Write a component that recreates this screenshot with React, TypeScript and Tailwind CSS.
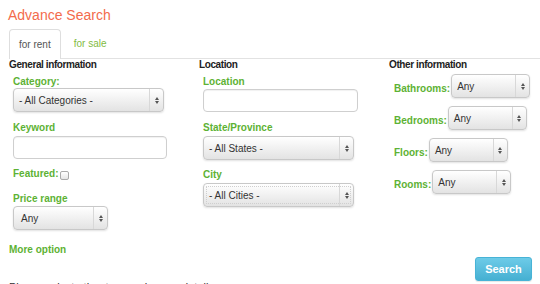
import React from 'react'

const GREEN = 'text-[#5db234]'

type SelectProps = { value: string; width: string; top?: boolean; focused?: boolean; pad?: string }

const FakeSelect = ({ value, width, top, focused, pad = 'pl-[5px]' }: SelectProps) => (
  <div
    className={`flex h-[24px] ${width} rounded-[4px] border border-[#c8c8c8] bg-linear-to-b from-white to-[#e3e3e3] text-[10px] text-[#333] shadow-[0_1px_2px_rgba(0,0,0,0.12)] ${
      focused ? 'outline-1 outline-dotted outline-[#cfcfcf] -outline-offset-[4px]' : ''
    }`}
  >
    <div className={`flex flex-1 ${top ? 'items-start pt-[4px]' : 'items-center'} ${pad}`}>{value}</div>
    <div className="flex w-[14px] flex-col items-center justify-center gap-[1px] border-l border-[#d8d8d8]">
      <span className="h-0 w-0 border-x-[2px] border-b-[3px] border-x-transparent border-b-[#555]" />
      <span className="h-0 w-0 border-x-[2px] border-t-[3px] border-x-transparent border-t-[#555]" />
    </div>
  </div>
)

const TextInput = ({ width }: { width: string }) => (
  <div className={`h-[23px] ${width} rounded-[4px] border border-[#cfcfcf] bg-white shadow-[inset_0_1px_1px_rgba(0,0,0,0.06)]`} />
)

const Label = ({ children, className = '' }: { children: React.ReactNode; className?: string }) => (
  <div className={`h-[13px] text-[10px] font-bold leading-[13px] ${GREEN} ${className}`}>{children}</div>
)

const Header = ({ children }: { children: React.ReactNode }) => (
  <div className="h-[12px] text-[10px] font-bold leading-[12px] tracking-[-0.4px] text-[#222]">{children}</div>
)

const OTHER = [
  { label: 'Bathrooms:', mt: 'mt-[3px]' },
  { label: 'Bedrooms:', mt: 'mt-[8px]' },
  { label: 'Floors:', mt: 'mt-[8px]' },
  { label: 'Rooms:', mt: 'mt-[8px]' },
]

export default function App() {
  return (
    <div className="h-[284px] w-[540px] overflow-hidden bg-white font-['Liberation_Sans',Arial,sans-serif] text-[#333]">
      <h1 className="px-[8px] pt-[7px] text-[14px] leading-[17px] text-[#f36b4c]">Advance Search</h1>

      <div className="ml-[9px] mt-[5px] flex border-b border-[#e2e2e2]">
        <div className="-mb-px flex h-[30px] items-center rounded-t-[4px] border border-b-0 border-[#dedede] bg-white px-[9px] text-[10px] text-[#555]">
          for rent
        </div>
        <div className="flex h-[29px] items-center px-[13px] text-[10px] text-[#82bb3f]">for sale</div>
      </div>

      <div className="flex px-[9px]">
        {/* General information */}
        <div className="w-[190px]">
          <Header>General information</Header>
          <div className="pl-[4px]">
            <Label className="mt-[4px]">Category:</Label>
            <FakeSelect value="- All Categories -" width="w-[151px]" />
            <Label className="mt-[9px]">Keyword</Label>
            <div className="mt-[2px]">
              <TextInput width="w-[154px]" />
            </div>
            <div className="mt-[8px] flex items-center">
              <Label>Featured:</Label>
              <span className="ml-[1px] mt-[3px] h-[9px] w-[9px] rounded-[2px] border border-[#aaa] bg-linear-to-b from-white to-[#e6e6e6]" />
            </div>
            <Label className="mt-[12px]">Price range</Label>
            <div className="mt-[1px]">
              <FakeSelect value="Any" width="w-[95px]" pad="pl-[7px]" />
            </div>
          </div>
          <Label className="mt-[13px]">More option</Label>
        </div>

        {/* Location */}
        <div className="w-[190px]">
          <Header>Location</Header>
          <div className="pl-[4px]">
            <Label className="mt-[4px]">Location</Label>
            <div className="mt-[1px]">
              <TextInput width="w-[155px]" />
            </div>
            <Label className="mt-[9px]">State/Province</Label>
            <div className="mt-[2px]">
              <FakeSelect value="- All States -" width="w-[151px]" />
            </div>
            <Label className="mt-[8px]">City</Label>
            <div className="mt-[2px]">
              <FakeSelect value="- All Cities -" width="w-[151px]" focused />
            </div>
          </div>
        </div>

        {/* Other information */}
        <div className="flex-1">
          <Header>Other information</Header>
          <div className="pl-[5px]">
            {OTHER.map(({ label, mt }) => (
              <div key={label} className={`flex items-center ${mt}`}>
                <Label className="mt-[5px]">{label}</Label>
                <div className="ml-[1px]">
                  <FakeSelect value="Any" width="w-[79px]" top />
                </div>
              </div>
            ))}
          </div>
        </div>
      </div>

      <div className="flex items-start justify-between pl-[9px] pr-[8px]">
        <p className="pt-[24px] text-[11px] leading-[14px] text-[#333]">Please select other to search more details</p>
        <button className="mt-[1px] h-[24px] w-[57px] rounded-[3px] border border-[#47b3d6] bg-linear-to-b from-[#6dcbe8] to-[#45b0d2] text-[11px] font-bold text-white shadow-[0_1px_1px_rgba(0,0,0,0.1)]">
          Search
        </button>
      </div>
    </div>
  )
}
